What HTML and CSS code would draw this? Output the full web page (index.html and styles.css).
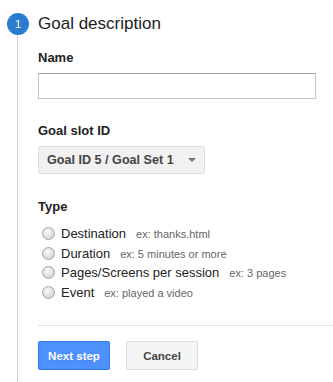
FILE: index.html
```html
<!DOCTYPE html>
<html lang="en">
  <head>
    <meta charset="UTF-8" />
    <meta name="viewport" content="width=device-width, initial-scale=1.0" />
    <title>Goal description</title>
    <link rel="stylesheet" href="styles.css">
  </head>
  <body>
    <main class="step">
      <div class="rail">
        <div class="step-num">1</div>
        <div class="step-line"></div>
      </div>
      <section class="content">
        <h1 class="title">Goal description</h1>

        <div class="label">Name</div>
        <input class="text-input" type="text" />

        <div class="label">Goal slot ID</div>
        <div class="select">
          <span>Goal ID 5 / Goal Set 1</span>
          <span class="arrow"></span>
        </div>

        <div class="label">Type</div>
        <div class="radios">
          <label class="radio-row"><input type="radio" name="type" /><span>Destination<span class="hint">ex: thanks.html</span></span></label>
          <label class="radio-row"><input type="radio" name="type" /><span>Duration<span class="hint">ex: 5 minutes or more</span></span></label>
          <label class="radio-row"><input type="radio" name="type" /><span>Pages/Screens per session<span class="hint">ex: 3 pages</span></span></label>
          <label class="radio-row"><input type="radio" name="type" /><span>Event<span class="hint">ex: played a video</span></span></label>
        </div>

        <div class="actions">
          <button class="btn btn-primary">Next step</button>
          <button class="btn">Cancel</button>
        </div>
      </section>
    </main>
  </body>
</html>
```

FILE: styles.css
```css
body {
  margin: 0;
  font-family: "Liberation Sans", Arial, sans-serif;
  color: #222;
  background: #fff;
}
.step {
  display: flex;
  min-height: 100vh;
}
.rail {
  width: 38px;
  flex: none;
  display: flex;
  flex-direction: column;
  padding: 13px 0 0 7px;
  box-sizing: border-box;
}
.step-num {
  width: 22px;
  height: 22px;
  border-radius: 50%;
  background: #2b7bd0;
  color: #fff;
  font-size: 11px;
  line-height: 22px;
  text-align: center;
}
.step-line {
  flex: 1;
  width: 1px;
  margin-left: 10px;
  background: #cfcfcf;
}
.content {
  flex: 1;
  padding-top: 14px;
}
.title {
  margin: 0;
  font-size: 17px;
  font-weight: normal;
  line-height: 20px;
}
.label {
  margin-top: 16px;
  font-size: 13px;
  font-weight: bold;
  line-height: 15px;
}
.label + .text-input,
.label + .select {
  margin-top: 8px;
}
.text-input {
  display: block;
  width: 278px;
  height: 26px;
  box-sizing: border-box;
  margin: 0;
  border: 1px solid #c4c4c4;
  border-top-color: #a0a0a0;
  border-radius: 0;
}
.text-input + .label {
  margin-top: 24px;
}
.select {
  display: flex;
  align-items: center;
  width: 167px;
  height: 28px;
  box-sizing: border-box;
  padding: 0 8px;
  background: #f1f1f1;
  border: 1px solid #dcdcdc;
  border-radius: 2px;
  color: #444;
  font-size: 12.6px;
  font-weight: bold;
}
.select + .label {
  margin-top: 25px;
}
.arrow {
  margin-left: auto;
  width: 0;
  height: 0;
  border-top: 4px solid #777;
  border-left: 4px solid transparent;
  border-right: 4px solid transparent;
}
.radios {
  margin-top: 10px;
}
.radio-row {
  display: flex;
  align-items: center;
  height: 19.5px;
  font-size: 13px;
}
.radio-row input {
  appearance: none;
  width: 13px;
  height: 13px;
  margin: 0 6px 0 4px;
  border: 1px solid #a3a3a3;
  border-radius: 50%;
  box-sizing: border-box;
  background: radial-gradient(circle at 40% 35%, #fbfbfb 0, #e4e4e4 45%, #c9c9c9 100%);
}
.hint {
  margin-left: 10px;
  font-size: 11px;
  color: #666;
}
.actions {
  margin-top: 23px;
  padding-top: 15px;
  border-top: 1px solid #e2e2e2;
  display: flex;
  gap: 16px;
}
.btn {
  width: 72px;
  height: 29px;
  margin: 0;
  padding: 0;
  font-family: inherit;
  font-size: 11.5px;
  font-weight: bold;
  color: #444;
  background: #f5f5f5;
  border: 1px solid #dcdcdc;
  border-radius: 2px;
}
.btn-primary {
  color: #fff;
  background: #4d90fe;
  border-color: #3079ed;
  text-shadow: 0 1px rgba(0, 0, 0, 0.1);
}
```
